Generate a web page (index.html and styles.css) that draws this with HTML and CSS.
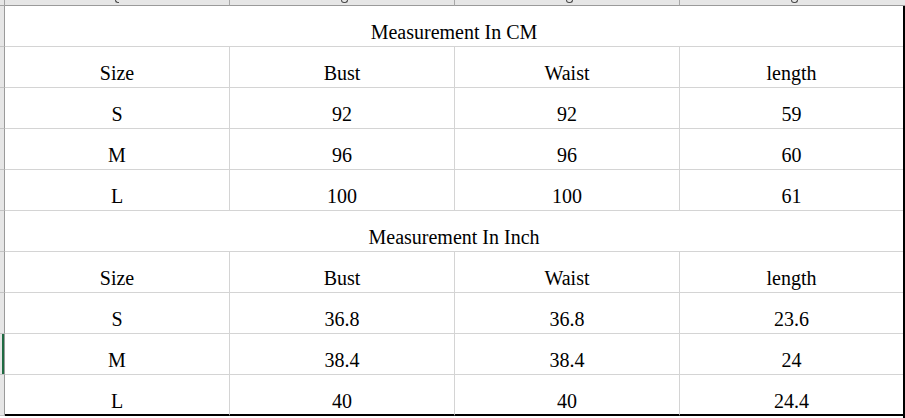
FILE: index.html
```html
<!DOCTYPE html>
<html>
<head>
<meta charset="utf-8">
<link rel="stylesheet" href="styles.css">
</head>
<body>
<div class="sheet">
  <div class="corner"></div>
  <div class="colhead">
    <div class="ch"><i class="tail tail-y"></i></div>
    <div class="ch"><i class="tail"></i></div>
    <div class="ch"><i class="tail"></i></div>
    <div class="ch last"><i class="tail"></i></div>
  </div>
  <div class="rowhead">
    <div class="rh"></div>
    <div class="rh"></div>
    <div class="rh"></div>
    <div class="rh"></div>
    <div class="rh"></div>
    <div class="rh"></div>
    <div class="rh"></div>
    <div class="rh"></div>
    <div class="rh active"></div>
    <div class="rh"></div>
  </div>
  <div class="table">
    <div class="cell title">Measurement In CM</div>
    <div class="cell">Size</div><div class="cell">Bust</div><div class="cell">Waist</div><div class="cell end">length</div>
    <div class="cell">S</div><div class="cell">92</div><div class="cell">92</div><div class="cell end">59</div>
    <div class="cell">M</div><div class="cell">96</div><div class="cell">96</div><div class="cell end">60</div>
    <div class="cell">L</div><div class="cell">100</div><div class="cell">100</div><div class="cell end">61</div>
    <div class="cell title">Measurement In Inch</div>
    <div class="cell">Size</div><div class="cell">Bust</div><div class="cell">Waist</div><div class="cell end">length</div>
    <div class="cell">S</div><div class="cell">36.8</div><div class="cell">36.8</div><div class="cell end">23.6</div>
    <div class="cell">M</div><div class="cell">38.4</div><div class="cell">38.4</div><div class="cell end">24</div>
    <div class="cell bottom">L</div><div class="cell bottom">40</div><div class="cell bottom">40</div><div class="cell end bottom">24.4</div>
  </div>
</div>
</body>
</html>
```
FILE: styles.css
```css
* { box-sizing: border-box; }
html, body { margin: 0; padding: 0; background: #ffffff; }
body { width: 905px; height: 418px; overflow: hidden; font-family: "Liberation Serif", "Times New Roman", serif; color: #000; }

.sheet {
  display: grid;
  grid-template-columns: 5px 900px;
  grid-template-rows: 6px 412px;
}

.corner {
  background: #e6e6e6;
  border-right: 1px solid #a3a3a3;
  border-bottom: 1px solid #a3a3a3;
}

.colhead {
  display: grid;
  grid-template-columns: 225px 225px 225px 225px;
}
.ch {
  height: 6px;
  background: #e6e6e6;
  border-right: 1px solid #a8a8a8;
  border-bottom: 1px solid #9a9a9a;
  display: flex;
  justify-content: center;
  align-items: flex-start;
}
.ch.last { border-right: none; }
.tail {
  display: block;
  width: 7px;
  height: 3px;
  margin-left: 4px;
  border: 1.5px solid #4a4a4a;
  border-top: none;
  border-radius: 0 0 4px 4px;
}
.tail-y {
  width: 4px;
  margin-left: 0;
  border-right: none;
  border-radius: 0 0 0 3px;
}

.rowhead {
  display: flex;
  flex-direction: column;
}
.rh {
  height: 41px;
  flex: none;
  background: #e6e6e6;
  border-right: 1px solid #9a9a9a;
  border-bottom: 1px solid #c4c4c4;
}
.rh.active { box-shadow: inset -2px 0 0 #1f6b42; }

.table {
  display: grid;
  grid-template-columns: 225px 225px 225px 223px;
  grid-auto-rows: 41px;
  border-right: 2px solid #000;
  width: 900px;
}
.cell {
  display: flex;
  justify-content: center;
  align-items: flex-end;
  padding-bottom: 4px;
  font-size: 20px;
  line-height: 20px;
  border-right: 1px solid #d4d4d4;
  border-bottom: 1px solid #d4d4d4;
  white-space: nowrap;
}
.cell.end { border-right: none; }
.cell.title {
  grid-column: 1 / span 4;
  border-right: none;
}
.cell.bottom {
  border-bottom: 2px solid #000;
  padding-bottom: 3px;
}
```
